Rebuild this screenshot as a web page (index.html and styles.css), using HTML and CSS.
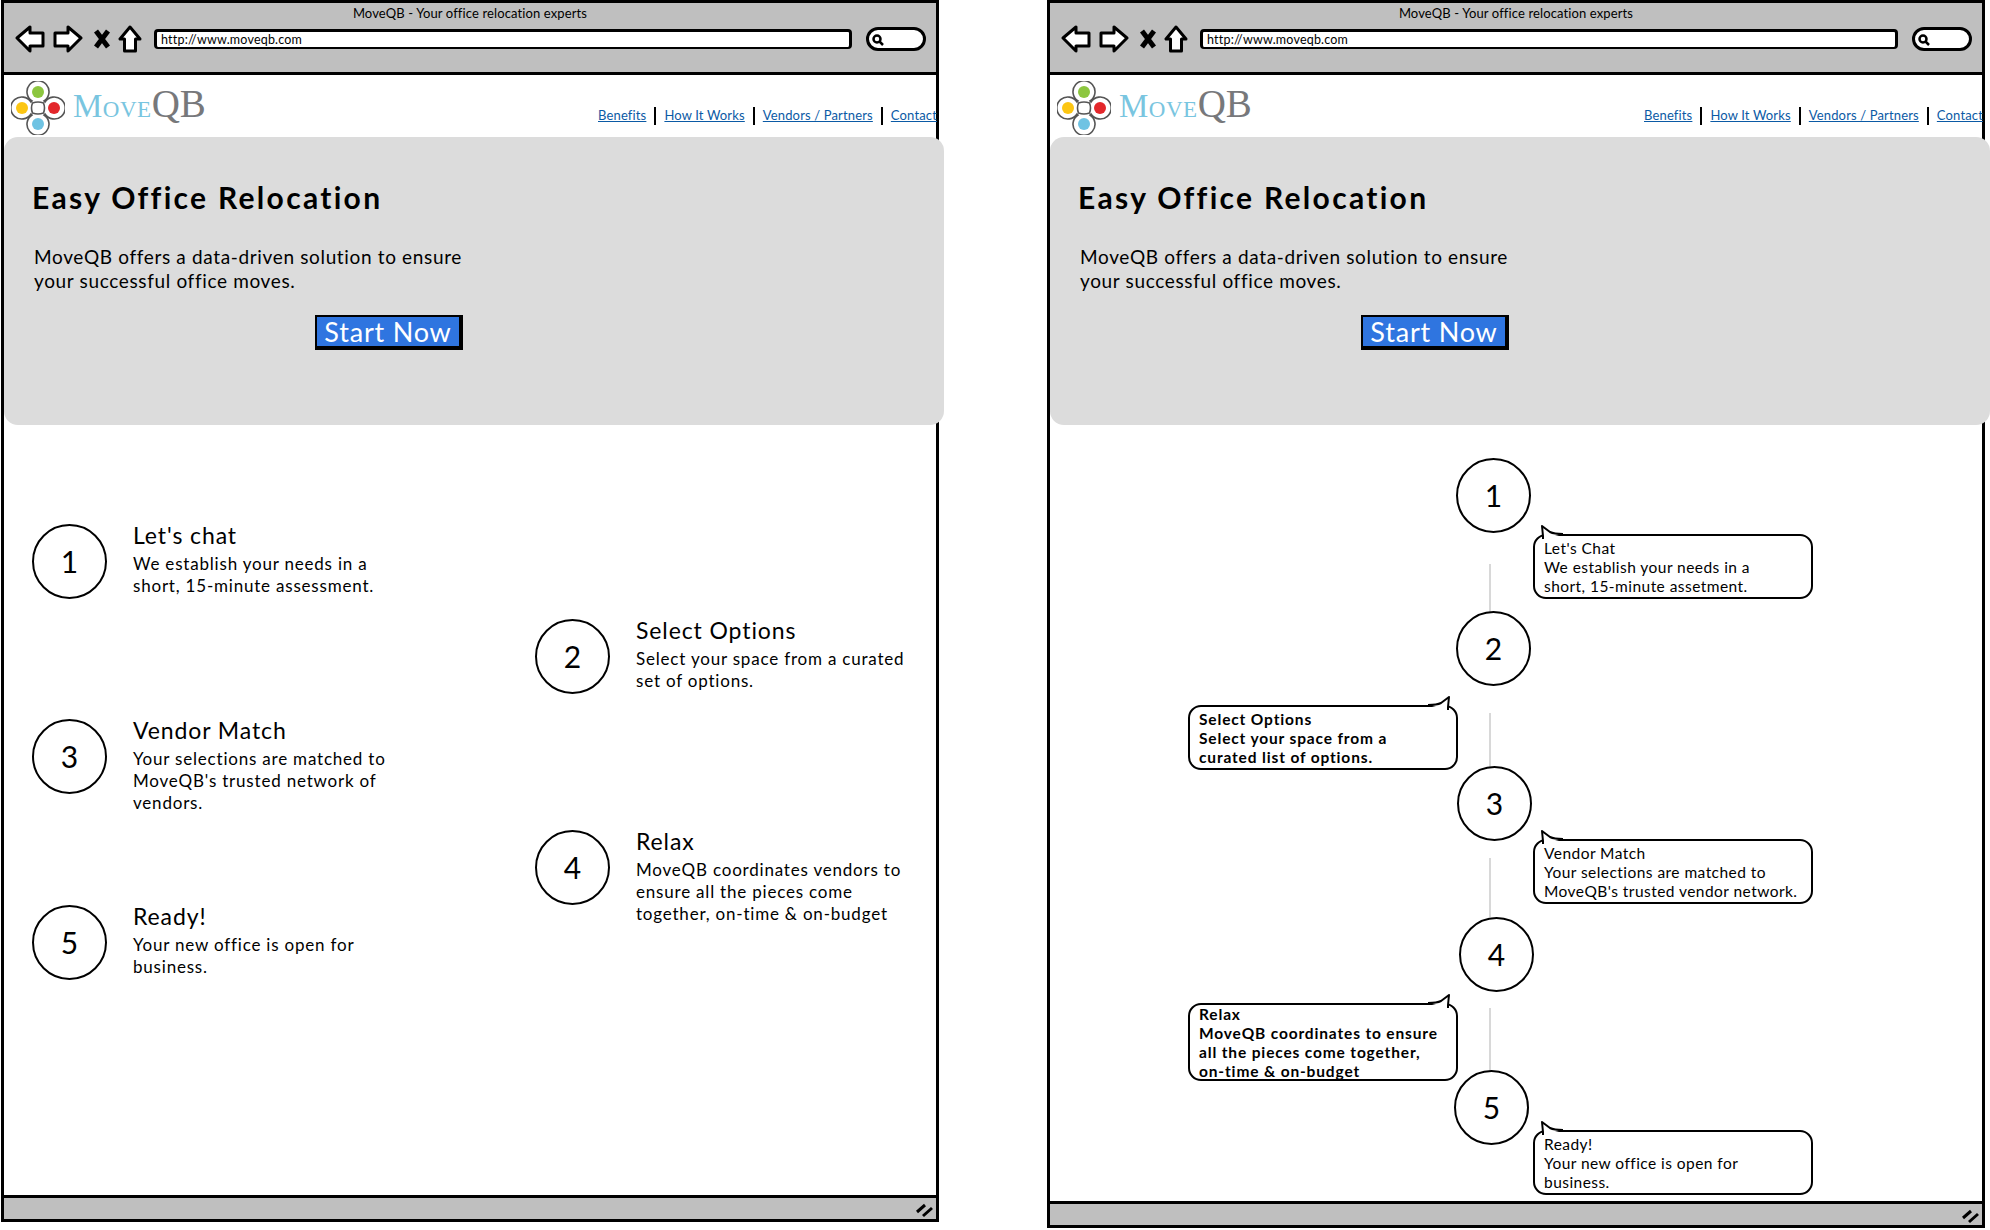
FILE: index.html
```html
<!DOCTYPE html>
<html lang="en">
<head>
    <meta charset="UTF-8">
    <title>MoveQB - Your office relocation experts</title>
    <link rel="stylesheet" href="styles.css">
</head>
<body>
    <!-- version A: staggered steps -->
    <div class="window window-a">
        <div class="titlebar">
            <p class="page-title">MoveQB - Your office relocation experts</p>
            <div class="toolbar">
                <svg class="nav-icon" width="30" height="28" viewBox="0 0 30 28"><path d="M2 13 L15 2 V8 H28 V21 H15 V26 Z"/></svg>
                <svg class="nav-icon" width="30" height="28" viewBox="0 0 30 28"><path d="M28 13 L15 2 V8 H2 V21 H15 V26 Z"/></svg>
                <svg class="stop-icon" width="20" height="22" viewBox="0 0 20 22"><path d="M4 3 L16 19 M16 3 L4 19"/></svg>
                <svg class="nav-icon" width="24" height="28" viewBox="0 0 24 28"><path d="M12 2 L2 14 H6.500 V26 H17.500 V14 H22 Z"/></svg>
                <div class="url-bar">http://www.moveqb.com</div>
                <div class="search-box">
                    <svg width="14" height="14" viewBox="0 0 14 14"><circle cx="6" cy="6" r="3.500"/><path d="M8.500 8.500 L12 12"/></svg>
                </div>
            </div>
        </div>
        <div class="site-header">
            <a class="logo">
                <svg width="54" height="54" viewBox="10 80 54 54">
                    <path class="logo-line" d="M31 100 A11 11 0 1 1 43 100 L44 101 A11 11 0 1 1 44 113 L43 114 A11 11 0 1 1 31 114 L30 113 A11 11 0 1 1 30 101 Z"/>
                    <path class="logo-line" d="M31.500 102 Q37 100 42.500 102 Q44.500 107 42.500 112 Q37 114 31.500 112 Q29.500 107 31.500 102 Z"/>
                    <circle cx="37" cy="91" r="6" fill="#8cc63f"/>
                    <circle cx="21" cy="107" r="6" fill="#fcc613"/>
                    <circle cx="53" cy="107" r="6" fill="#e3272b"/>
                    <circle cx="37" cy="123" r="6" fill="#6fc3e3"/>
                </svg>
                <span class="logo-move">Move</span><span class="logo-qb">QB</span>
            </a>
            <nav class="site-nav">
                <a>Benefits</a><a>How It Works</a><a>Vendors / Partners</a><a>Contact</a>
            </nav>
        </div>
        <div class="hero">
            <h1>Easy Office Relocation</h1>
            <p>MoveQB offers a data-driven solution to ensure<br>your successful office moves.</p>
            <button class="btn-start">Start Now</button>
        </div>
        <div class="steps">
            <div class="step-col col-left">
                <div class="step">
                    <div class="circle">1</div>
                    <div><h2>Let's chat</h2><p>We establish your needs in a<br>short, 15-minute assessment.</p></div>
                </div>
                <div class="step">
                    <div class="circle">3</div>
                    <div><h2>Vendor Match</h2><p>Your selections are matched to<br>MoveQB's trusted network of<br>vendors.</p></div>
                </div>
                <div class="step">
                    <div class="circle">5</div>
                    <div><h2>Ready!</h2><p>Your new office is open for<br>business.</p></div>
                </div>
            </div>
            <div class="step-col col-right">
                <div class="step">
                    <div class="circle">2</div>
                    <div><h2>Select Options</h2><p>Select your space from a curated<br>set of options.</p></div>
                </div>
                <div class="step">
                    <div class="circle">4</div>
                    <div><h2>Relax</h2><p>MoveQB coordinates vendors to<br>ensure all the pieces come<br>together, on-time &amp; on-budget</p></div>
                </div>
            </div>
        </div>
        <div class="statusbar">
            <svg class="grip" width="18" height="16" viewBox="0 0 18 16"><path d="M1 10 L9 3 M7 14 L16 6"/></svg>
        </div>
    </div>

    <!-- version B: timeline with bubbles -->
    <div class="window window-b">
        <div class="titlebar">
            <p class="page-title">MoveQB - Your office relocation experts</p>
            <div class="toolbar">
                <svg class="nav-icon" width="30" height="28" viewBox="0 0 30 28"><path d="M2 13 L15 2 V8 H28 V21 H15 V26 Z"/></svg>
                <svg class="nav-icon" width="30" height="28" viewBox="0 0 30 28"><path d="M28 13 L15 2 V8 H2 V21 H15 V26 Z"/></svg>
                <svg class="stop-icon" width="20" height="22" viewBox="0 0 20 22"><path d="M4 3 L16 19 M16 3 L4 19"/></svg>
                <svg class="nav-icon" width="24" height="28" viewBox="0 0 24 28"><path d="M12 2 L2 14 H6.500 V26 H17.500 V14 H22 Z"/></svg>
                <div class="url-bar">http://www.moveqb.com</div>
                <div class="search-box">
                    <svg width="14" height="14" viewBox="0 0 14 14"><circle cx="6" cy="6" r="3.500"/><path d="M8.500 8.500 L12 12"/></svg>
                </div>
            </div>
        </div>
        <div class="site-header">
            <a class="logo">
                <svg width="54" height="54" viewBox="10 80 54 54">
                    <path class="logo-line" d="M31 100 A11 11 0 1 1 43 100 L44 101 A11 11 0 1 1 44 113 L43 114 A11 11 0 1 1 31 114 L30 113 A11 11 0 1 1 30 101 Z"/>
                    <path class="logo-line" d="M31.500 102 Q37 100 42.500 102 Q44.500 107 42.500 112 Q37 114 31.500 112 Q29.500 107 31.500 102 Z"/>
                    <circle cx="37" cy="91" r="6" fill="#8cc63f"/>
                    <circle cx="21" cy="107" r="6" fill="#fcc613"/>
                    <circle cx="53" cy="107" r="6" fill="#e3272b"/>
                    <circle cx="37" cy="123" r="6" fill="#6fc3e3"/>
                </svg>
                <span class="logo-move">Move</span><span class="logo-qb">QB</span>
            </a>
            <nav class="site-nav">
                <a>Benefits</a><a>How It Works</a><a>Vendors / Partners</a><a>Contact</a>
            </nav>
        </div>
        <div class="hero">
            <h1>Easy Office Relocation</h1>
            <p>MoveQB offers a data-driven solution to ensure<br>your successful office moves.</p>
            <button class="btn-start">Start Now</button>
        </div>
        <div class="timeline">
            <div class="link link-1"></div>
            <div class="link link-2"></div>
            <div class="link link-3"></div>
            <div class="link link-4"></div>

            <div class="circle node node-1">1</div>
            <div class="circle node node-2">2</div>
            <div class="circle node node-3">3</div>
            <div class="circle node node-4">4</div>
            <div class="circle node node-5">5</div>

            <div class="bubble bubble-r bubble-1">
                <svg class="tail" width="24" height="14" viewBox="0 0 24 14"><path d="M4 14 V11 L3 1 L11 7 Q15 9 24 9"/></svg>
                Let's Chat<br>We establish your needs in a<br>short, 15-minute assetment.
            </div>
            <div class="bubble bubble-l bubble-2">
                <svg class="tail" width="24" height="14" viewBox="0 0 24 14"><path d="M20 14 V11 L21 1 L13 7 Q9 9 0 9"/></svg>
                Select Options<br>Select your space from a<br>curated list of options.
            </div>
            <div class="bubble bubble-r bubble-3">
                <svg class="tail" width="24" height="14" viewBox="0 0 24 14"><path d="M4 14 V11 L3 1 L11 7 Q15 9 24 9"/></svg>
                Vendor Match<br>Your selections are matched to<br>MoveQB's trusted vendor network.
            </div>
            <div class="bubble bubble-l bubble-4">
                <svg class="tail" width="24" height="14" viewBox="0 0 24 14"><path d="M20 14 V11 L21 1 L13 7 Q9 9 0 9"/></svg>
                Relax<br>MoveQB coordinates to ensure<br>all the pieces come together,<br>on-time &amp; on-budget
            </div>
            <div class="bubble bubble-r bubble-5">
                <svg class="tail" width="24" height="14" viewBox="0 0 24 14"><path d="M4 14 V11 L3 1 L11 7 Q15 9 24 9"/></svg>
                Ready!<br>Your new office is open for<br>business.
            </div>
        </div>
        <div class="statusbar">
            <svg class="grip" width="18" height="16" viewBox="0 0 18 16"><path d="M1 10 L9 3 M7 14 L16 6"/></svg>
        </div>
    </div>
</body>
</html>
```

FILE: styles.css
```css
* {
    padding: 0px;
    margin: 0px;
    box-sizing: border-box;
}
html, body {
    width: 1990px;
    height: 1230px;
    overflow: hidden;
}
body {
    position: relative;
    background-color: #fff;
    color: #000;
    font-family: Lato, "Noto Sans", sans-serif;
}

/* browser frames sit freely on the canvas */
.window {
    position: absolute;
    top: 0px;
    width: 938px;
    border: 3px solid #000;
    display: flex;
    flex-direction: column;
}
.window-a {
    left: 1px;
    height: 1222px;
}
.window-b {
    left: 1047px;
    height: 1228px;
}

.titlebar {
    height: 72px;
    flex: none;
    background-color: #bfbfbf;
    border-bottom: 3px solid #000;
}
.page-title {
    height: 17px;
    margin-top: 2px;
    text-align: center;
    font-size: 13px;
    line-height: 17px;
    letter-spacing: 0.12px;
}
.toolbar {
    display: flex;
    align-items: center;
    height: 30px;
    margin-top: 2px;
    padding-left: 11px;
}
.nav-icon {
    margin-right: 8px;
    fill: #fff;
    stroke: #000;
    stroke-width: 3;
    stroke-linejoin: round;
}
.stop-icon {
    margin: 0px 6px 0px 1px;
    fill: none;
    stroke: #000;
    stroke-width: 5;
}
.url-bar {
    width: 698px;
    height: 20px;
    margin-left: 4px;
    padding-left: 4px;
    background-color: #fff;
    border: 3px solid #000;
    border-bottom-width: 2px;
    border-radius: 4px;
    font-size: 12.500px;
    line-height: 15px;
    letter-spacing: 0.2px;
}
.search-box {
    width: 60px;
    height: 24px;
    margin-left: 14px;
    padding: 3px 0px 0px 2px;
    background-color: #fff;
    border: 3px solid #000;
    border-radius: 12px;
}
.search-box svg {
    display: block;
    fill: none;
    stroke: #000;
    stroke-width: 2.500;
}

.site-header {
    height: 62px;
    flex: none;
    display: flex;
    justify-content: space-between;
}
.logo {
    display: flex;
    align-items: baseline;
    padding: 6px 0px 0px 7px;
    font-family: "Liberation Serif", serif;
    white-space: nowrap;
}
.logo svg {
    align-self: flex-start;
    margin-right: 8px;
}
.logo-line {
    fill: #fff;
    stroke: #555;
    stroke-width: 1.600;
}
.logo-move {
    font-size: 33px;
    font-variant: small-caps;
    letter-spacing: 0.5px;
    color: #79c5e0;
}
.logo-qb {
    font-size: 39px;
    color: #77787b;
}
.site-nav {
    display: flex;
    align-items: flex-start;
    width: 338px;
    padding-top: 32px;
    white-space: nowrap;
}
.site-nav a {
    height: 18px;
    padding-right: 8px;
    margin-right: 8px;
    border-right: 2px solid #000;
    font-size: 13px;
    line-height: 17px;
    letter-spacing: 0.15px;
    color: #0b5aa5;
    text-decoration: underline;
}
.site-nav a:last-child {
    padding-right: 0px;
    margin-right: 0px;
    border-right: none;
}

.hero {
    width: 940px;
    height: 288px;
    flex: none;
    padding: 41px 0px 0px 28px;
    background-color: #dcdcdc;
    border-radius: 14px;
}
.hero h1 {
    font-size: 30px;
    line-height: 38px;
    font-weight: 700;
    letter-spacing: 2.300px;
}
.hero p {
    margin-top: 29px;
    margin-left: 2px;
    font-size: 19px;
    line-height: 24px;
    letter-spacing: 0.65px;
}
.btn-start {
    display: block;
    width: 148px;
    height: 35px;
    margin: 22px 0px 0px 283px;
    background-color: #2f75e0;
    border: 2px solid #000;
    border-right-width: 4px;
    border-bottom-width: 4px;
    color: #fff;
    font-family: inherit;
    font-size: 27px;
    line-height: 25px;
    letter-spacing: 0.8px;
}

.steps {
    flex: 1;
    display: flex;
    padding: 95px 0px 0px 28px;
}
.step-col {
    display: grid;
    align-content: start;
}
.col-left {
    width: 503px;
    grid-template-rows: 195px 186px auto;
}
.col-right {
    flex: 1;
    padding-top: 95px;
    grid-template-rows: 211px auto;
}
.step {
    display: flex;
    align-items: flex-start;
    gap: 26px;
}
.step .circle {
    margin-top: 4px;
}
.step h2 {
    margin: 1px 0px 4px;
    font-size: 23px;
    line-height: 28px;
    font-weight: 400;
    letter-spacing: 0.9px;
}
.step p {
    font-size: 17px;
    line-height: 22px;
    letter-spacing: 0.8px;
}
.circle {
    width: 75px;
    height: 75px;
    flex: none;
    display: flex;
    align-items: center;
    justify-content: center;
    padding-bottom: 2px;
    background-color: #fff;
    border: 2px solid #000;
    border-radius: 50%;
    font-size: 30px;
}

/* timeline nodes: offsets are the diagram itself */
.timeline {
    flex: 1;
    position: relative;
}
.node {
    position: absolute;
}
.node-1 { left: 406px; top: 33px; }
.node-2 { left: 406px; top: 186px; }
.node-3 { left: 407px; top: 341px; }
.node-4 { left: 409px; top: 492px; }
.node-5 { left: 404px; top: 645px; }

.link {
    position: absolute;
    left: 439px;
    width: 2px;
    background-color: #d8d8d8;
}
.link-1 { top: 139px; height: 63px; }
.link-2 { top: 288px; height: 64px; }
.link-3 { top: 433px; height: 59px; }
.link-4 { top: 583px; height: 64px; }

.bubble {
    position: absolute;
    background-color: #fff;
    border: 2px solid #000;
    border-radius: 13px;
    padding: 3px 0px 0px 9px;
    font-size: 15.500px;
    line-height: 19px;
    letter-spacing: 0.45px;
    white-space: nowrap;
}
.bubble-r {
    left: 483px;
    width: 280px;
}
.bubble-l {
    left: 138px;
    width: 270px;
    font-weight: 700;
    letter-spacing: 0.85px;
}
.tail {
    position: absolute;
    top: -11px;
    fill: #fff;
    stroke: #000;
    stroke-width: 2;
    stroke-linejoin: round;
}
.bubble-r .tail { left: 4px; }
.bubble-l .tail { right: 4px; }
.bubble-1 { top: 109px; height: 65px; }
.bubble-2 { top: 280px; height: 65px; }
.bubble-3 { top: 414px; height: 65px; }
.bubble-4 { top: 578px; height: 78px; padding-top: 0px; }
.bubble-5 { top: 705px; height: 65px; }

.statusbar {
    height: 24px;
    margin-top: auto;
    flex: none;
    position: relative;
    background-color: #bfbfbf;
    border-top: 3px solid #000;
}
.grip {
    position: absolute;
    right: 2px;
    bottom: 1px;
    fill: none;
    stroke: #000;
    stroke-width: 3;
}
```
